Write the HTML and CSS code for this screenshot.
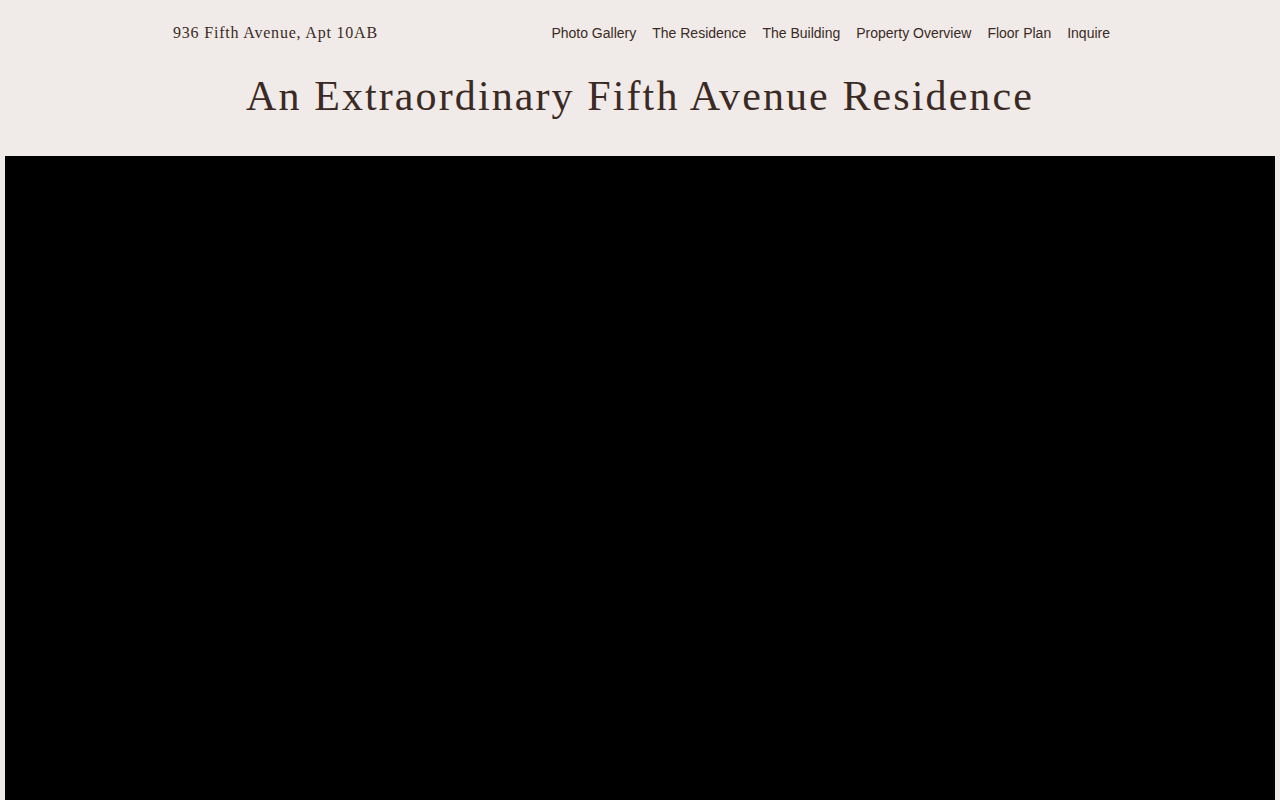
FILE: index.html
```html
<!DOCTYPE html>
<html lang="en">
<head>
<meta charset="utf-8">
<title>936 Fifth Avenue, Apt 10AB</title>
<link rel="stylesheet" href="styles.css">
</head>
<body>
<header class="site-header">
  <div class="topbar">
    <div class="address">936 Fifth Avenue, Apt 10AB</div>
    <nav class="nav">
      <a href="#">Photo Gallery</a>
      <a href="#">The Residence</a>
      <a href="#">The Building</a>
      <a href="#">Property Overview</a>
      <a href="#">Floor Plan</a>
      <a href="#">Inquire</a>
    </nav>
  </div>
  <h1 class="title">An Extraordinary Fifth Avenue Residence</h1>
</header>
<main class="hero"></main>
</body>
</html>
```
FILE: styles.css
```css
html, body {
  margin: 0;
  padding: 0;
  background: #f0ebe8;
  color: #3b2a24;
}
body {
  padding: 0 5px;
  font-family: "Liberation Serif", "Times New Roman", serif;
}
.site-header {
  padding-top: 22px;
}
.topbar {
  width: 940px;
  margin: 0 auto;
  display: flex;
  justify-content: space-between;
  align-items: center;
  padding-left: 3px;
  box-sizing: border-box;
}
.address {
  font-size: 16px;
  letter-spacing: 0.8px;
  line-height: 22px;
}
.nav {
  display: flex;
  gap: 16px;
  font-family: "Liberation Sans", Arial, sans-serif;
  font-size: 14px;
  line-height: 22px;
}
.nav a {
  color: #3b2a24;
  text-decoration: none;
}
.title {
  margin: 24px 0 0;
  text-align: center;
  font-weight: normal;
  font-size: 42px;
  letter-spacing: 2.1px;
  line-height: 56px;
  padding-bottom: 32px;
}
.hero {
  background: #000;
  height: 700px;
}
```
